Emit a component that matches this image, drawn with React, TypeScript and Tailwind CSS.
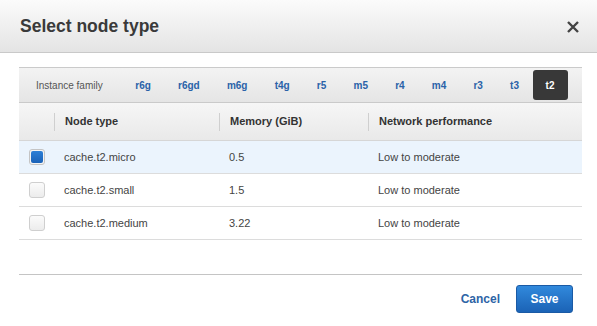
import React from "react";

const tabs = ["r6g", "r6gd", "m6g", "t4g", "r5", "m5", "r4", "m4", "r3", "t3"];

const rows = [
  { name: "cache.t2.micro", mem: "0.5", net: "Low to moderate", sel: true },
  { name: "cache.t2.small", mem: "1.5", net: "Low to moderate", sel: false },
  { name: "cache.t2.medium", mem: "3.22", net: "Low to moderate", sel: false },
];

function Checkbox({ checked }: { checked: boolean }) {
  if (checked) {
    return (
      <div className="w-[16px] h-[16px] rounded-[3px] border border-[#c4c4c4] bg-[#f4f4f4] flex items-center justify-center">
        <div className="w-[12px] h-[12px] rounded-[2px] bg-gradient-to-b from-[#2d7fd6] to-[#1a62b8]" />
      </div>
    );
  }
  return (
    <div className="w-[16px] h-[16px] rounded-[3px] border border-[#cfcfcf] bg-gradient-to-b from-[#fbfbfb] to-[#ececec]" />
  );
}

export default function App() {
  return (
    <div
      className="w-[597px] h-[326px] bg-white flex flex-col overflow-hidden"
      style={{ fontFamily: '"Liberation Sans", Arial, sans-serif' }}
    >
      {/* Header */}
      <div className="h-[53px] shrink-0 flex items-center justify-between pl-5 pr-[18px] bg-gradient-to-b from-[#fbfbfb] to-[#e4e4e4] border-b border-[#c9c9c9]">
        <div className="text-[17.5px] font-bold text-[#3a3a3a] leading-none pt-[1px]">Select node type</div>
        <svg width="12" height="12" viewBox="0 0 12 12" className="mt-[2px]">
          <path d="M1 1 L11 11 M11 1 L1 11" stroke="#444" strokeWidth="2.4" strokeLinecap="butt" />
        </svg>
      </div>

      {/* Body */}
      <div className="ml-[19px] mr-[15px] mt-[14px] flex flex-col">
        {/* Tab bar */}
        <div className="h-[36px] flex items-center border-t border-b border-[#cacaca] bg-gradient-to-b from-[#f3f3f3] to-[#e5e5e5]">
          <div className="pl-[17px] pr-[19px] text-[10px] text-[#555]">Instance family</div>
          {tabs.map((t) => (
            <div key={t} className="px-[13.6px] text-[10px] font-bold text-[#2a62a8]">
              {t}
            </div>
          ))}
          <div className="h-[30px] w-[35px] rounded-[3px] bg-[#383838] flex items-center justify-center text-[10px] font-bold text-white">
            t2
          </div>
        </div>

        {/* Table header */}
        <div className="h-[38px] flex items-center border-b border-[#d6d6d6] bg-gradient-to-b from-[#f6f6f6] to-[#e9e9e9] text-[11px] font-bold text-[#333]">
          <div className="w-[35px] h-[18px]" />
          <div className="w-[165px] h-[18px] border-l border-[#cfcfcf] pl-[10px] flex items-center">Node type</div>
          <div className="w-[149px] h-[18px] border-l border-[#cfcfcf] pl-[10px] flex items-center">Memory (GiB)</div>
          <div className="flex-1 h-[18px] border-l border-[#cfcfcf] pl-[10px] flex items-center">Network performance</div>
        </div>

        {/* Rows */}
        {rows.map((r) => (
          <div
            key={r.name}
            className={`h-[33px] flex items-center border-b border-[#dcdcdc] text-[11px] text-[#444] ${r.sel ? "bg-[#ebf4fd]" : "bg-white"}`}
          >
            <div className="w-[35px] pl-[10px] flex items-center">
              <Checkbox checked={r.sel} />
            </div>
            <div className="w-[165px] pl-[10px]">{r.name}</div>
            <div className="w-[149px] pl-[10px]">{r.mem}</div>
            <div className="flex-1 pl-[10px]">{r.net}</div>
          </div>
        ))}

        {/* Footer */}
        <div className="mt-[34px] border-t border-[#c4c4c4] pt-[10px] flex items-center justify-end pr-[9px]">
          <div className="text-[12px] font-bold text-[#2d64a6] mr-[16px]">Cancel</div>
          <div className="w-[57px] h-[28px] rounded-[3px] border border-[#1a5aa5] bg-gradient-to-b from-[#3189dc] to-[#1b63b6] flex items-center justify-center text-[12px] font-bold text-white">
            Save
          </div>
        </div>
      </div>
    </div>
  );
}
